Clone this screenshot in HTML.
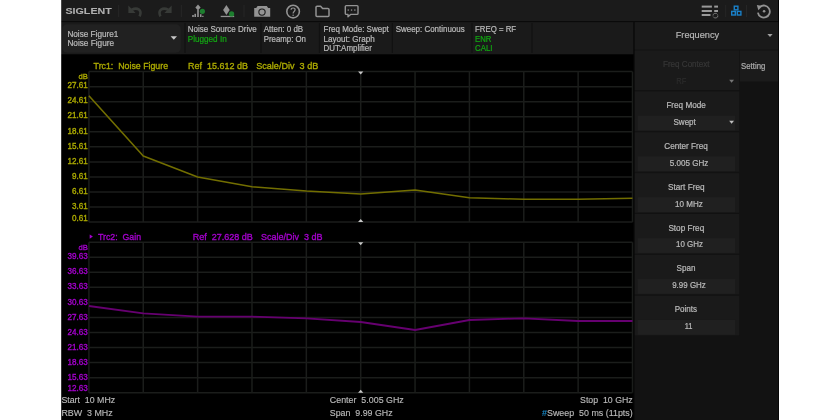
<!DOCTYPE html><html><head><meta charset="utf-8"><style>
html,body{margin:0;padding:0;background:#fff;width:840px;height:420px;overflow:hidden}
svg{position:absolute;left:0;top:0;filter:blur(0.45px)}
text{font-family:"Liberation Sans",sans-serif}
</style></head><body>
<svg width="840" height="420" viewBox="0 0 840 420">
<rect x="58" y="0" width="724" height="420" fill="#000"/>
<rect x="58" y="0" width="720" height="21.3" fill="#1b1b1b"/>
<rect x="58" y="21.3" width="720" height="0.8" fill="#0c0c0c"/>
<rect x="58" y="22.1" width="575.6" height="32.2" fill="#1a1a1a"/>
<rect x="62.3" y="24.2" width="118.4" height="28.6" rx="5" fill="#212121"/>
<rect x="184.4" y="23" width="1.2" height="30" fill="#111"/>
<rect x="260.4" y="23" width="1.2" height="30" fill="#111"/>
<rect x="318.9" y="23" width="1.2" height="30" fill="#111"/>
<rect x="391.7" y="23" width="1.2" height="30" fill="#111"/>
<rect x="471.4" y="23" width="1.2" height="30" fill="#111"/>
<rect x="531.4" y="23" width="1.2" height="30" fill="#111"/>
<rect x="738.8" y="50" width="1" height="370" fill="#0b0b0b"/>
<rect x="633.6" y="22.1" width="144.4" height="397.9" fill="#0c0c0c"/>
<rect x="634.8" y="22.1" width="143.6" height="397.9" fill="#121212"/>
<rect x="634.8" y="22.1" width="143.2" height="27.4" fill="#1a1a1a"/>
<rect x="634.8" y="50.50" width="104.4" height="39.6" fill="#1a1a1a"/>
<rect x="634.8" y="91.37" width="104.4" height="39.6" fill="#1a1a1a"/>
<rect x="637.6" y="115.57" width="97.6" height="14.8" fill="#202020"/>
<rect x="634.8" y="132.24" width="104.4" height="39.6" fill="#1a1a1a"/>
<rect x="637.6" y="156.44" width="97.6" height="14.8" fill="#202020"/>
<rect x="634.8" y="173.11" width="104.4" height="39.6" fill="#1a1a1a"/>
<rect x="637.6" y="197.31" width="97.6" height="14.8" fill="#202020"/>
<rect x="634.8" y="213.98" width="104.4" height="39.6" fill="#1a1a1a"/>
<rect x="637.6" y="238.18" width="97.6" height="14.8" fill="#202020"/>
<rect x="634.8" y="254.85" width="104.4" height="39.6" fill="#1a1a1a"/>
<rect x="637.6" y="279.05" width="97.6" height="14.8" fill="#202020"/>
<rect x="634.8" y="295.72" width="104.4" height="39.6" fill="#1a1a1a"/>
<rect x="637.6" y="319.92" width="97.6" height="14.8" fill="#202020"/>
<rect x="739.8" y="50.5" width="38.2" height="31" fill="#1b1b1b"/>
<line x1="88.9" y1="71.60" x2="632.5" y2="71.60" stroke="#1b1d1b" stroke-width="1.5"/>
<line x1="88.9" y1="86.65" x2="632.5" y2="86.65" stroke="#1b1d1b" stroke-width="1.5"/>
<line x1="88.9" y1="101.70" x2="632.5" y2="101.70" stroke="#1b1d1b" stroke-width="1.5"/>
<line x1="88.9" y1="116.75" x2="632.5" y2="116.75" stroke="#1b1d1b" stroke-width="1.5"/>
<line x1="88.9" y1="131.80" x2="632.5" y2="131.80" stroke="#1b1d1b" stroke-width="1.5"/>
<line x1="88.9" y1="146.85" x2="632.5" y2="146.85" stroke="#1b1d1b" stroke-width="1.5"/>
<line x1="88.9" y1="161.90" x2="632.5" y2="161.90" stroke="#1b1d1b" stroke-width="1.5"/>
<line x1="88.9" y1="176.95" x2="632.5" y2="176.95" stroke="#1b1d1b" stroke-width="1.5"/>
<line x1="88.9" y1="192.00" x2="632.5" y2="192.00" stroke="#1b1d1b" stroke-width="1.5"/>
<line x1="88.9" y1="207.05" x2="632.5" y2="207.05" stroke="#1b1d1b" stroke-width="1.5"/>
<line x1="88.9" y1="222.10" x2="632.5" y2="222.10" stroke="#1b1d1b" stroke-width="1.5"/>
<line x1="88.90" y1="71.6" x2="88.90" y2="222.1" stroke="#1b1d1b" stroke-width="1.5"/>
<line x1="143.26" y1="71.6" x2="143.26" y2="222.1" stroke="#1b1d1b" stroke-width="1.5"/>
<line x1="197.62" y1="71.6" x2="197.62" y2="222.1" stroke="#1b1d1b" stroke-width="1.5"/>
<line x1="251.98" y1="71.6" x2="251.98" y2="222.1" stroke="#1b1d1b" stroke-width="1.5"/>
<line x1="306.34" y1="71.6" x2="306.34" y2="222.1" stroke="#1b1d1b" stroke-width="1.5"/>
<line x1="360.70" y1="71.6" x2="360.70" y2="222.1" stroke="#1b1d1b" stroke-width="1.5"/>
<line x1="415.06" y1="71.6" x2="415.06" y2="222.1" stroke="#1b1d1b" stroke-width="1.5"/>
<line x1="469.42" y1="71.6" x2="469.42" y2="222.1" stroke="#1b1d1b" stroke-width="1.5"/>
<line x1="523.78" y1="71.6" x2="523.78" y2="222.1" stroke="#1b1d1b" stroke-width="1.5"/>
<line x1="578.14" y1="71.6" x2="578.14" y2="222.1" stroke="#1b1d1b" stroke-width="1.5"/>
<line x1="632.50" y1="71.6" x2="632.50" y2="222.1" stroke="#1b1d1b" stroke-width="1.5"/>
<line x1="88.9" y1="242.20" x2="632.5" y2="242.20" stroke="#1b1d1b" stroke-width="1.5"/>
<line x1="88.9" y1="257.25" x2="632.5" y2="257.25" stroke="#1b1d1b" stroke-width="1.5"/>
<line x1="88.9" y1="272.30" x2="632.5" y2="272.30" stroke="#1b1d1b" stroke-width="1.5"/>
<line x1="88.9" y1="287.35" x2="632.5" y2="287.35" stroke="#1b1d1b" stroke-width="1.5"/>
<line x1="88.9" y1="302.40" x2="632.5" y2="302.40" stroke="#1b1d1b" stroke-width="1.5"/>
<line x1="88.9" y1="317.45" x2="632.5" y2="317.45" stroke="#1b1d1b" stroke-width="1.5"/>
<line x1="88.9" y1="332.50" x2="632.5" y2="332.50" stroke="#1b1d1b" stroke-width="1.5"/>
<line x1="88.9" y1="347.55" x2="632.5" y2="347.55" stroke="#1b1d1b" stroke-width="1.5"/>
<line x1="88.9" y1="362.60" x2="632.5" y2="362.60" stroke="#1b1d1b" stroke-width="1.5"/>
<line x1="88.9" y1="377.65" x2="632.5" y2="377.65" stroke="#1b1d1b" stroke-width="1.5"/>
<line x1="88.9" y1="392.70" x2="632.5" y2="392.70" stroke="#1b1d1b" stroke-width="1.5"/>
<line x1="88.90" y1="242.2" x2="88.90" y2="392.7" stroke="#1b1d1b" stroke-width="1.5"/>
<line x1="143.26" y1="242.2" x2="143.26" y2="392.7" stroke="#1b1d1b" stroke-width="1.5"/>
<line x1="197.62" y1="242.2" x2="197.62" y2="392.7" stroke="#1b1d1b" stroke-width="1.5"/>
<line x1="251.98" y1="242.2" x2="251.98" y2="392.7" stroke="#1b1d1b" stroke-width="1.5"/>
<line x1="306.34" y1="242.2" x2="306.34" y2="392.7" stroke="#1b1d1b" stroke-width="1.5"/>
<line x1="360.70" y1="242.2" x2="360.70" y2="392.7" stroke="#1b1d1b" stroke-width="1.5"/>
<line x1="415.06" y1="242.2" x2="415.06" y2="392.7" stroke="#1b1d1b" stroke-width="1.5"/>
<line x1="469.42" y1="242.2" x2="469.42" y2="392.7" stroke="#1b1d1b" stroke-width="1.5"/>
<line x1="523.78" y1="242.2" x2="523.78" y2="392.7" stroke="#1b1d1b" stroke-width="1.5"/>
<line x1="578.14" y1="242.2" x2="578.14" y2="392.7" stroke="#1b1d1b" stroke-width="1.5"/>
<line x1="632.50" y1="242.2" x2="632.50" y2="392.7" stroke="#1b1d1b" stroke-width="1.5"/>
<polyline points="88.90,95.7 143.26,156 197.62,177 251.98,186.7 306.34,191 360.70,194 415.06,190 469.42,197.7 523.78,199.3 578.14,199.3 632.50,198.3" fill="none" stroke="#726e00" stroke-width="1.6" stroke-linejoin="round"/>
<polyline points="88.90,306 143.26,313.3 197.62,316.7 251.98,316.7 306.34,318.3 360.70,322 415.06,330 469.42,320 523.78,318.3 578.14,321 632.50,321" fill="none" stroke="#660070" stroke-width="1.8" stroke-linejoin="round"/>
<path d="M358.10,71.60 L363.30,71.60 L360.70,74.60 Z" fill="#c8c8c8"/>
<path d="M358.10,222.10 L363.30,222.10 L360.70,219.10 Z" fill="#c8c8c8"/>
<path d="M358.10,242.20 L363.30,242.20 L360.70,245.20 Z" fill="#c8c8c8"/>
<path d="M358.10,392.70 L363.30,392.70 L360.70,389.70 Z" fill="#c8c8c8"/>
<text x="67.43" y="88.20" font-size="8.4" fill="#acaa00" text-anchor="start" font-weight="normal" textLength="20.27" lengthAdjust="spacingAndGlyphs" xml:space="preserve" stroke="#acaa00" stroke-width="0.35">27.61</text>
<text x="67.43" y="103.31" font-size="8.4" fill="#acaa00" text-anchor="start" font-weight="normal" textLength="20.27" lengthAdjust="spacingAndGlyphs" xml:space="preserve" stroke="#acaa00" stroke-width="0.35">24.61</text>
<text x="67.43" y="118.42" font-size="8.4" fill="#acaa00" text-anchor="start" font-weight="normal" textLength="20.27" lengthAdjust="spacingAndGlyphs" xml:space="preserve" stroke="#acaa00" stroke-width="0.35">21.61</text>
<text x="67.43" y="133.53" font-size="8.4" fill="#acaa00" text-anchor="start" font-weight="normal" textLength="20.27" lengthAdjust="spacingAndGlyphs" xml:space="preserve" stroke="#acaa00" stroke-width="0.35">18.61</text>
<text x="67.43" y="148.64" font-size="8.4" fill="#acaa00" text-anchor="start" font-weight="normal" textLength="20.27" lengthAdjust="spacingAndGlyphs" xml:space="preserve" stroke="#acaa00" stroke-width="0.35">15.61</text>
<text x="67.43" y="163.75" font-size="8.4" fill="#acaa00" text-anchor="start" font-weight="normal" textLength="20.27" lengthAdjust="spacingAndGlyphs" xml:space="preserve" stroke="#acaa00" stroke-width="0.35">12.61</text>
<text x="71.94" y="178.86" font-size="8.4" fill="#acaa00" text-anchor="start" font-weight="normal" textLength="15.76" lengthAdjust="spacingAndGlyphs" xml:space="preserve" stroke="#acaa00" stroke-width="0.35">9.61</text>
<text x="71.94" y="193.97" font-size="8.4" fill="#acaa00" text-anchor="start" font-weight="normal" textLength="15.76" lengthAdjust="spacingAndGlyphs" xml:space="preserve" stroke="#acaa00" stroke-width="0.35">6.61</text>
<text x="71.94" y="209.08" font-size="8.4" fill="#acaa00" text-anchor="start" font-weight="normal" textLength="15.76" lengthAdjust="spacingAndGlyphs" xml:space="preserve" stroke="#acaa00" stroke-width="0.35">3.61</text>
<text x="71.94" y="220.60" font-size="8.4" fill="#acaa00" text-anchor="start" font-weight="normal" textLength="15.76" lengthAdjust="spacingAndGlyphs" xml:space="preserve" stroke="#acaa00" stroke-width="0.35">0.61</text>
<text x="78.4" y="79.4" font-size="8" fill="#acaa00" text-anchor="start" font-weight="normal" textLength="9.4" lengthAdjust="spacingAndGlyphs" xml:space="preserve" stroke="#acaa00" stroke-width="0.3">dB</text>
<text x="67.43" y="259.30" font-size="8.4" fill="#a400cc" text-anchor="start" font-weight="normal" textLength="20.27" lengthAdjust="spacingAndGlyphs" xml:space="preserve" stroke="#a400cc" stroke-width="0.35">39.63</text>
<text x="67.43" y="274.39" font-size="8.4" fill="#a400cc" text-anchor="start" font-weight="normal" textLength="20.27" lengthAdjust="spacingAndGlyphs" xml:space="preserve" stroke="#a400cc" stroke-width="0.35">36.63</text>
<text x="67.43" y="289.48" font-size="8.4" fill="#a400cc" text-anchor="start" font-weight="normal" textLength="20.27" lengthAdjust="spacingAndGlyphs" xml:space="preserve" stroke="#a400cc" stroke-width="0.35">33.63</text>
<text x="67.43" y="304.57" font-size="8.4" fill="#a400cc" text-anchor="start" font-weight="normal" textLength="20.27" lengthAdjust="spacingAndGlyphs" xml:space="preserve" stroke="#a400cc" stroke-width="0.35">30.63</text>
<text x="67.43" y="319.66" font-size="8.4" fill="#a400cc" text-anchor="start" font-weight="normal" textLength="20.27" lengthAdjust="spacingAndGlyphs" xml:space="preserve" stroke="#a400cc" stroke-width="0.35">27.63</text>
<text x="67.43" y="334.75" font-size="8.4" fill="#a400cc" text-anchor="start" font-weight="normal" textLength="20.27" lengthAdjust="spacingAndGlyphs" xml:space="preserve" stroke="#a400cc" stroke-width="0.35">24.63</text>
<text x="67.43" y="349.84" font-size="8.4" fill="#a400cc" text-anchor="start" font-weight="normal" textLength="20.27" lengthAdjust="spacingAndGlyphs" xml:space="preserve" stroke="#a400cc" stroke-width="0.35">21.63</text>
<text x="67.43" y="364.93" font-size="8.4" fill="#a400cc" text-anchor="start" font-weight="normal" textLength="20.27" lengthAdjust="spacingAndGlyphs" xml:space="preserve" stroke="#a400cc" stroke-width="0.35">18.63</text>
<text x="67.43" y="380.02" font-size="8.4" fill="#a400cc" text-anchor="start" font-weight="normal" textLength="20.27" lengthAdjust="spacingAndGlyphs" xml:space="preserve" stroke="#a400cc" stroke-width="0.35">15.63</text>
<text x="67.43" y="391.10" font-size="8.4" fill="#a400cc" text-anchor="start" font-weight="normal" textLength="20.27" lengthAdjust="spacingAndGlyphs" xml:space="preserve" stroke="#a400cc" stroke-width="0.35">12.63</text>
<text x="78.4" y="250.3" font-size="8" fill="#a400cc" text-anchor="start" font-weight="normal" textLength="9.4" lengthAdjust="spacingAndGlyphs" xml:space="preserve" stroke="#a400cc" stroke-width="0.3">dB</text>
<text x="93.6" y="69.2" font-size="9.6" fill="#acaa00" text-anchor="start" font-weight="normal" textLength="74.5" lengthAdjust="spacingAndGlyphs" xml:space="preserve" stroke="#acaa00" stroke-width="0.35">Trc1:  Noise Figure</text>
<text x="188.1" y="69.2" font-size="9.6" fill="#acaa00" text-anchor="start" font-weight="normal" textLength="59.8" lengthAdjust="spacingAndGlyphs" xml:space="preserve" stroke="#acaa00" stroke-width="0.35">Ref  15.612 dB</text>
<text x="256.2" y="69.2" font-size="9.6" fill="#acaa00" text-anchor="start" font-weight="normal" textLength="62.1" lengthAdjust="spacingAndGlyphs" xml:space="preserve" stroke="#acaa00" stroke-width="0.35">Scale/Div  3 dB</text>
<path d="M89.7,234.4 L92.9,236.6 L89.7,238.8 Z" fill="#a400cc"/>
<text x="98.0" y="239.8" font-size="9.6" fill="#a400cc" text-anchor="start" font-weight="normal" textLength="43.0" lengthAdjust="spacingAndGlyphs" xml:space="preserve" stroke="#a400cc" stroke-width="0.35">Trc2:  Gain</text>
<text x="192.7" y="239.8" font-size="9.6" fill="#a400cc" text-anchor="start" font-weight="normal" textLength="60.2" lengthAdjust="spacingAndGlyphs" xml:space="preserve" stroke="#a400cc" stroke-width="0.35">Ref  27.628 dB</text>
<text x="261.1" y="239.8" font-size="9.6" fill="#a400cc" text-anchor="start" font-weight="normal" textLength="61.4" lengthAdjust="spacingAndGlyphs" xml:space="preserve" stroke="#a400cc" stroke-width="0.35">Scale/Div  3 dB</text>
<text x="61.4" y="403.3" font-size="9.4" fill="#bababa" text-anchor="start" font-weight="normal" textLength="53.8" lengthAdjust="spacingAndGlyphs" xml:space="preserve" stroke="#bababa" stroke-width="0.15">Start  10 MHz</text>
<text x="61.4" y="416.3" font-size="9.4" fill="#bababa" text-anchor="start" font-weight="normal" textLength="51.3" lengthAdjust="spacingAndGlyphs" xml:space="preserve" stroke="#bababa" stroke-width="0.15">RBW  3 MHz</text>
<text x="329.8" y="403.3" font-size="9.4" fill="#bababa" text-anchor="start" font-weight="normal" textLength="74.0" lengthAdjust="spacingAndGlyphs" xml:space="preserve" stroke="#bababa" stroke-width="0.15">Center  5.005 GHz</text>
<text x="329.8" y="416.3" font-size="9.4" fill="#bababa" text-anchor="start" font-weight="normal" textLength="62.8" lengthAdjust="spacingAndGlyphs" xml:space="preserve" stroke="#bababa" stroke-width="0.15">Span  9.99 GHz</text>
<text x="580.1" y="403.3" font-size="9.4" fill="#bababa" text-anchor="start" font-weight="normal" textLength="52.6" lengthAdjust="spacingAndGlyphs" xml:space="preserve" stroke="#bababa" stroke-width="0.15">Stop  10 GHz</text>
<text x="542.1" y="416.3" font-size="9.4" fill="#bababa" text-anchor="start" font-weight="normal" textLength="90.6" lengthAdjust="spacingAndGlyphs" xml:space="preserve" stroke="#bababa" stroke-width="0.15"><tspan fill="#1a8ccc" stroke="#1a8ccc">#</tspan>Sweep  50 ms (11pts)</text>
<text x="67.4" y="36.7" font-size="8.8" fill="#bababa" text-anchor="start" font-weight="normal" textLength="51.0" lengthAdjust="spacingAndGlyphs" xml:space="preserve" stroke="#bababa" stroke-width="0.22">Noise Figure1</text>
<text x="67.4" y="45.6" font-size="8.8" fill="#bababa" text-anchor="start" font-weight="normal" textLength="46.7" lengthAdjust="spacingAndGlyphs" xml:space="preserve" stroke="#bababa" stroke-width="0.22">Noise Figure</text>
<path d="M170.6,36.2 L177,36.2 L173.8,39.8 Z" fill="#c8c8c8"/>
<text x="187.7" y="31.5" font-size="8.8" fill="#bababa" text-anchor="start" font-weight="normal" textLength="69.0" lengthAdjust="spacingAndGlyphs" xml:space="preserve" stroke="#bababa" stroke-width="0.22">Noise Source Drive</text>
<text x="187.7" y="41.6" font-size="8.8" fill="#12a812" text-anchor="start" font-weight="normal" textLength="39.0" lengthAdjust="spacingAndGlyphs" xml:space="preserve" stroke="#12a812" stroke-width="0.22">Plugged In</text>
<text x="263.7" y="31.5" font-size="8.8" fill="#bababa" text-anchor="start" font-weight="normal" textLength="39.5" lengthAdjust="spacingAndGlyphs" xml:space="preserve" stroke="#bababa" stroke-width="0.22">Atten: 0 dB</text>
<text x="263.7" y="41.6" font-size="8.8" fill="#bababa" text-anchor="start" font-weight="normal" textLength="42.3" lengthAdjust="spacingAndGlyphs" xml:space="preserve" stroke="#bababa" stroke-width="0.22">Preamp: On</text>
<text x="323.5" y="31.5" font-size="8.8" fill="#bababa" text-anchor="start" font-weight="normal" textLength="65.3" lengthAdjust="spacingAndGlyphs" xml:space="preserve" stroke="#bababa" stroke-width="0.22">Freq Mode: Swept</text>
<text x="323.5" y="41.6" font-size="8.8" fill="#bababa" text-anchor="start" font-weight="normal" textLength="51.3" lengthAdjust="spacingAndGlyphs" xml:space="preserve" stroke="#bababa" stroke-width="0.22">Layout: Graph</text>
<text x="323.5" y="51.3" font-size="8.8" fill="#bababa" text-anchor="start" font-weight="normal" textLength="48.4" lengthAdjust="spacingAndGlyphs" xml:space="preserve" stroke="#bababa" stroke-width="0.22">DUT:Amplifier</text>
<text x="395.7" y="31.5" font-size="8.8" fill="#bababa" text-anchor="start" font-weight="normal" textLength="69.0" lengthAdjust="spacingAndGlyphs" xml:space="preserve" stroke="#bababa" stroke-width="0.22">Sweep: Continuous</text>
<text x="475.1" y="31.5" font-size="8.8" fill="#bababa" text-anchor="start" font-weight="normal" textLength="41.0" lengthAdjust="spacingAndGlyphs" xml:space="preserve" stroke="#bababa" stroke-width="0.22">FREQ = RF</text>
<text x="475.1" y="41.6" font-size="8.8" fill="#12a812" text-anchor="start" font-weight="normal" textLength="16.3" lengthAdjust="spacingAndGlyphs" xml:space="preserve" stroke="#12a812" stroke-width="0.22">ENR</text>
<text x="475.1" y="51.3" font-size="8.8" fill="#12a812" text-anchor="start" font-weight="normal" textLength="17.4" lengthAdjust="spacingAndGlyphs" xml:space="preserve" stroke="#12a812" stroke-width="0.22">CALI</text>
<text x="675.7" y="38.0" font-size="9.9" fill="#b8b8b8" text-anchor="start" font-weight="normal" textLength="43.5" lengthAdjust="spacingAndGlyphs" xml:space="preserve" stroke="#b8b8b8" stroke-width="0.18">Frequency</text>
<path d="M767.4,34 L772.6,34 L770,37 Z" fill="#a0a0a0"/>
<text x="663.0" y="67.03" font-size="8.7" fill="#363636" text-anchor="start" font-weight="normal" textLength="46.6" lengthAdjust="spacingAndGlyphs" xml:space="preserve" stroke="#363636" stroke-width="0.22">Freq Context</text>
<text x="676.3" y="83.93" font-size="8.7" fill="#2c2c2c" text-anchor="start" font-weight="normal" textLength="10.1" lengthAdjust="spacingAndGlyphs" xml:space="preserve" stroke="#2c2c2c" stroke-width="0.22">RF</text>
<text x="666.4" y="107.90" font-size="8.7" fill="#bababa" text-anchor="start" font-weight="normal" textLength="39.4" lengthAdjust="spacingAndGlyphs" xml:space="preserve" stroke="#bababa" stroke-width="0.22">Freq Mode</text>
<text x="673.5" y="124.80" font-size="8.7" fill="#bababa" text-anchor="start" font-weight="normal" textLength="22.3" lengthAdjust="spacingAndGlyphs" xml:space="preserve" stroke="#bababa" stroke-width="0.22">Swept</text>
<text x="664.3" y="148.77" font-size="8.7" fill="#bababa" text-anchor="start" font-weight="normal" textLength="43.6" lengthAdjust="spacingAndGlyphs" xml:space="preserve" stroke="#bababa" stroke-width="0.22">Center Freq</text>
<text x="669.7" y="165.67" font-size="8.7" fill="#bababa" text-anchor="start" font-weight="normal" textLength="38.6" lengthAdjust="spacingAndGlyphs" xml:space="preserve" stroke="#bababa" stroke-width="0.22">5.005 GHz</text>
<text x="668.0" y="189.64" font-size="8.7" fill="#bababa" text-anchor="start" font-weight="normal" textLength="36.6" lengthAdjust="spacingAndGlyphs" xml:space="preserve" stroke="#bababa" stroke-width="0.22">Start Freq</text>
<text x="675.1" y="206.54" font-size="8.7" fill="#bababa" text-anchor="start" font-weight="normal" textLength="27.8" lengthAdjust="spacingAndGlyphs" xml:space="preserve" stroke="#bababa" stroke-width="0.22">10 MHz</text>
<text x="668.4" y="230.51" font-size="8.7" fill="#bababa" text-anchor="start" font-weight="normal" textLength="35.8" lengthAdjust="spacingAndGlyphs" xml:space="preserve" stroke="#bababa" stroke-width="0.22">Stop Freq</text>
<text x="676.0" y="247.41" font-size="8.7" fill="#bababa" text-anchor="start" font-weight="normal" textLength="26.9" lengthAdjust="spacingAndGlyphs" xml:space="preserve" stroke="#bababa" stroke-width="0.22">10 GHz</text>
<text x="676.5" y="271.38" font-size="8.7" fill="#bababa" text-anchor="start" font-weight="normal" textLength="18.9" lengthAdjust="spacingAndGlyphs" xml:space="preserve" stroke="#bababa" stroke-width="0.22">Span</text>
<text x="672.2" y="288.28" font-size="8.7" fill="#bababa" text-anchor="start" font-weight="normal" textLength="33.6" lengthAdjust="spacingAndGlyphs" xml:space="preserve" stroke="#bababa" stroke-width="0.22">9.99 GHz</text>
<text x="674.7" y="312.25" font-size="8.7" fill="#bababa" text-anchor="start" font-weight="normal" textLength="22.4" lengthAdjust="spacingAndGlyphs" xml:space="preserve" stroke="#bababa" stroke-width="0.22">Points</text>
<text x="684.7" y="329.15" font-size="8.7" fill="#bababa" text-anchor="start" font-weight="normal" textLength="7.8" lengthAdjust="spacingAndGlyphs" xml:space="preserve" stroke="#bababa" stroke-width="0.22">11</text>
<path d="M729.2,79.8 L734,79.8 L731.6,82.8 Z" fill="#777"/>
<path d="M729.2,120.7 L734,120.7 L731.6,123.7 Z" fill="#c0c0c0"/>
<text x="741.1" y="68.9" font-size="8.6" fill="#adadad" text-anchor="start" font-weight="normal" textLength="24.2" lengthAdjust="spacingAndGlyphs" xml:space="preserve" stroke="#adadad" stroke-width="0.22">Setting</text>
<text x="65.5" y="13.9" font-size="9.6" fill="#b0b0b0" text-anchor="start" font-weight="bold" textLength="46.2" lengthAdjust="spacingAndGlyphs" xml:space="preserve" stroke="#b0b0b0" stroke-width="0.1">SIGLENT</text>
<rect x="118.1" y="5" width="1" height="12" fill="#262626"/>
<rect x="180.9" y="5" width="1" height="12" fill="#262626"/>
<rect x="243.5" y="5" width="1" height="12" fill="#262626"/>
<rect x="725.2" y="5" width="1" height="12" fill="#262626"/>
<rect x="746.0" y="5" width="1" height="12" fill="#262626"/>
<path d="M131.5,9.8 C137.5,6.8 142.5,10 139.6,16.4" fill="none" stroke="#373a37" stroke-width="2.6"/>
<path d="M128.4,5.6 L128.4,12.9 L135.6,12.9 Z" fill="#373a37"/>
<path d="M168.5,9.8 C162.5,6.8 157.5,10 160.4,16.4" fill="none" stroke="#373a37" stroke-width="2.6"/>
<path d="M171.6,5.6 L171.6,12.9 L164.4,12.9 Z" fill="#373a37"/>
<path d="M198,4.6 L200.6,7.5 L198,10.6 L195.4,7.5 Z" fill="#939393"/>
<rect x="197.2" y="10" width="1.6" height="7" fill="#939393"/>
<rect x="192.2" y="15" width="1.6" height="2" fill="#939393"/><rect x="194.4" y="13.8" width="1.6" height="3.2" fill="#939393"/><rect x="200" y="14.2" width="1.5" height="2.8" fill="#939393"/><rect x="202.2" y="15.8" width="1.3" height="1.2" fill="#939393"/>
<circle cx="202.4" cy="11.3" r="2.6" fill="#1d7f2f"/>
<path d="M226.4,4.9 L229.7,9.9 L226.4,14.9 L223.1,9.9 Z" fill="#939393"/>
<rect x="220.7" y="15.8" width="13.5" height="1.3" fill="#939393"/>
<circle cx="231.6" cy="13.9" r="2.6" fill="#1d7f2f"/>
<path d="M254.2,8 L256.2,8 L257.6,6 L266.8,6 L268.2,8 L270.2,8 L270.2,16.8 L254.2,16.8 Z" fill="#939393"/>
<circle cx="262" cy="12.1" r="3.7" fill="#1b1b1b"/><circle cx="262" cy="12.1" r="2.6" fill="#939393"/>
<circle cx="293.1" cy="11.6" r="6.3" fill="none" stroke="#939393" stroke-width="1.6"/>
<path d="M291.1,9.8 C291.1,7.4 295.1,7.4 295.1,9.8 C295.1,11.5 293.1,11.5 293.1,13.4" fill="none" stroke="#939393" stroke-width="1.2"/>
<circle cx="293.1" cy="15.3" r="0.75" fill="#939393"/>
<path d="M317,6.2 L320.6,6.2 L322.6,8.4 L327.8,8.4 Q329,8.4 329,9.6 L329,15.6 Q329,16.6 328,16.6 L317,16.6 Q316,16.6 316,15.6 L316,7.2 Q316,6.2 317,6.2 Z" fill="none" stroke="#939393" stroke-width="1.5" stroke-linejoin="round"/>
<path d="M346.3,5.6 L357,5.6 Q358,5.6 358,6.6 L358,13.4 Q358,14.4 357,14.4 L350.6,14.4 L348,16.8 L348,14.4 L346.3,14.4 Q345.3,14.4 345.3,13.4 L345.3,6.6 Q345.3,5.6 346.3,5.6 Z" fill="none" stroke="#939393" stroke-width="1.4" stroke-linejoin="round"/>
<rect x="347.6" y="9.4" width="1.3" height="1.3" fill="#939393"/><rect x="350.9" y="9.4" width="1.3" height="1.3" fill="#939393"/><rect x="354.2" y="9.4" width="1.3" height="1.3" fill="#939393"/>
<rect x="701.7" y="5.6" width="10.2" height="2" fill="#9a9a9a"/>
<rect x="701.7" y="10.0" width="10.2" height="2" fill="#9a9a9a"/>
<rect x="701.7" y="14.0" width="8.8" height="2" fill="#9a9a9a"/>
<rect x="714.2" y="5.6" width="3.8" height="2" fill="#9a9a9a"/><rect x="714.2" y="10.0" width="3.8" height="2" fill="#9a9a9a"/>
<path d="M713,15.6 A2.4,2.2 0 0 1 717.6,14.6 M717.8,15.4 A2.4,2.2 0 0 1 713.2,16.6" fill="none" stroke="#7a7a7a" stroke-width="0.9"/>
<rect x="734.30" y="6.20" width="3.6" height="3.6" fill="none" stroke="#1a80c8" stroke-width="1.4"/>
<rect x="731.70" y="11.40" width="3.6" height="3.6" fill="none" stroke="#1a80c8" stroke-width="1.4"/>
<rect x="737.30" y="11.40" width="3.6" height="3.6" fill="none" stroke="#1a80c8" stroke-width="1.4"/>
<path d="M760.0,6.9 A6,6 0 1 1 757.9,12.6" fill="none" stroke="#939393" stroke-width="1.8"/>
<path d="M756.8,5.0 L762.4,6.0 L758.4,10.2 Z" fill="#939393"/>
<circle cx="764.1" cy="11.3" r="1.3" fill="#939393"/>
</svg>
<svg width="840" height="420" style="filter:none"><rect x="0" y="0" width="61.2" height="420" fill="#fff"/><rect x="779" y="0" width="61" height="420" fill="#fff"/></svg>
</body></html>
